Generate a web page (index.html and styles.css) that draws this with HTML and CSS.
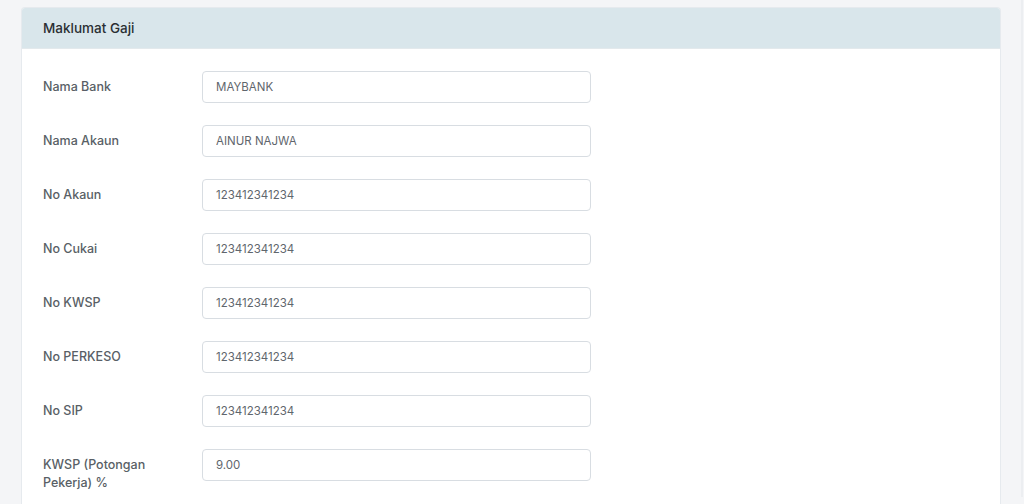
FILE: index.html
```html
<!DOCTYPE html>
<html lang="ms">
<head>
<meta charset="utf-8">
<title>Maklumat Gaji</title>
<link rel="stylesheet" href="styles.css">
</head>
<body>
<div class="page">
  <div class="card">
    <div class="card-header">Maklumat Gaji</div>
    <div class="card-body">
      <div class="row"><label class="lbl">Nama Bank</label><input class="inp" value="MAYBANK"></div>
      <div class="row"><label class="lbl">Nama Akaun</label><input class="inp" value="AINUR NAJWA"></div>
      <div class="row"><label class="lbl">No Akaun</label><input class="inp" value="123412341234"></div>
      <div class="row"><label class="lbl">No Cukai</label><input class="inp" value="123412341234"></div>
      <div class="row"><label class="lbl">No KWSP</label><input class="inp" value="123412341234"></div>
      <div class="row"><label class="lbl">No PERKESO</label><input class="inp" value="123412341234"></div>
      <div class="row"><label class="lbl">No SIP</label><input class="inp" value="123412341234"></div>
      <div class="row"><label class="lbl">KWSP (Potongan Pekerja) %</label><input class="inp" value="9.00"></div>
    </div>
  </div>
  <div class="track"></div>
</div>
</body>
</html>
```

FILE: styles.css
```css
html, body {
  margin: 0;
  padding: 0;
  height: 100%;
  overflow: hidden;
}
body {
  background: #f4f5f7;
  font-family: Inter, "Noto Sans", "Liberation Sans", sans-serif;
}
.page {
  display: flex;
  align-items: flex-start;
  padding: 7px 0 0 21px;
  gap: 20px;
}
.card {
  width: 980px;
  background: #ffffff;
  border: 1px solid #e6eaee;
  border-bottom: none;
  border-radius: 4px 4px 0 0;
  box-sizing: border-box;
  flex: none;
}
.card-header {
  background: #d9e6eb;
  border-radius: 3px 3px 0 0;
  height: 41px;
  box-sizing: border-box;
  padding: 0 21px;
  display: flex;
  align-items: center;
  font-size: 13.5px;
  font-weight: 500;
  color: #2b2f33;
  border-bottom: 1px solid #e3e9ec;
}
.card-body {
  padding: 22px 21px 22px;
  display: flex;
  flex-direction: column;
  gap: 22px;
}
.row {
  display: flex;
  align-items: flex-start;
}
.lbl {
  width: 144px;
  margin-right: 15px;
  padding-top: 7px;
  font-size: 12.5px;
  line-height: 18px;
  font-weight: 500;
  color: #595f66;
}
.inp {
  width: 389px;
  height: 32px;
  box-sizing: border-box;
  border: 1px solid #d8dde2;
  border-radius: 4px;
  padding: 0 13px;
  font-family: inherit;
  font-size: 11.5px;
  color: #5f666d;
  background: #fff;
  outline: none;
  margin: 0;
}
.track {
  width: 2px;
  height: 497px;
  margin-top: -7px;
  background: #eceef1;
  flex: none;
}
```
